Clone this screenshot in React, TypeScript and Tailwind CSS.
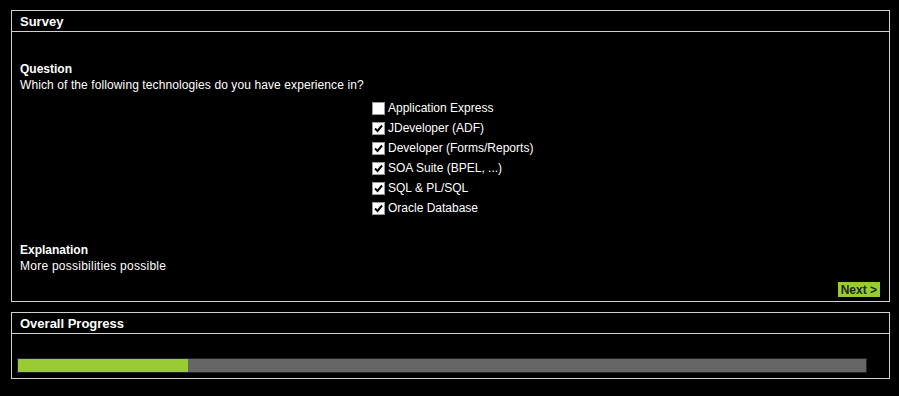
import React from 'react';

const options = [
  { label: 'Application Express', checked: false },
  { label: 'JDeveloper (ADF)', checked: true },
  { label: 'Developer (Forms/Reports)', checked: true },
  { label: 'SOA Suite (BPEL, ...)', checked: true },
  { label: 'SQL & PL/SQL', checked: true },
  { label: 'Oracle Database', checked: true },
];

function Box({ checked }: { checked: boolean }) {
  return (
    <span className="w-[13px] h-[13px] bg-white border border-[#999] flex items-center justify-center shrink-0">
      {checked && (
        <svg width="9" height="9" viewBox="0 0 9 9">
          <path d="M1 4.5 L3.5 7 L8 1.5" fill="none" stroke="#000" strokeWidth="2" />
        </svg>
      )}
    </span>
  );
}

function Panel({ title, children }: { title: string; children: React.ReactNode }) {
  return (
    <div className="border border-[#d0d0d0]">
      <div className="h-[21px] border-b border-[#d0d0d0] pl-[8px] flex items-center text-[13px] font-bold leading-none">
        {title}
      </div>
      {children}
    </div>
  );
}

export default function App() {
  return (
    <div
      className="w-[899px] h-[396px] bg-black text-white text-[12px] leading-4 pl-[11px] pr-[9px] pt-[10px]"
      style={{ fontFamily: '"Liberation Sans", Arial, sans-serif' }}
    >
      <Panel title="Survey">
        <div className="pl-2 pr-2 pt-[29px] pb-1">
          <div className="font-bold">Question</div>
          <div className="tracking-[0.1px]">Which of the following technologies do you have experience in?</div>
          <div className="pl-[352px] pt-[5px] flex flex-col">
            {options.map((o) => (
              <div key={o.label} className="h-5 flex items-center gap-[3px]">
                <Box checked={o.checked} />
                <span>{o.label}</span>
              </div>
            ))}
          </div>
          <div className="mt-6 font-bold">Explanation</div>
          <div className="tracking-[0.25px]">More possibilities possible</div>
          <div className="flex justify-end mt-2 pr-px">
            <button className="h-[15px] px-[3px] bg-[#99cc33] text-[#1a2a10] font-bold text-[12px] leading-none flex items-center">
              Next &gt;
            </button>
          </div>
        </div>
      </Panel>

      <div className="mt-[10px]">
        <Panel title="Overall Progress">
          <div className="pl-[5px] pt-6 pb-[5px]">
            <div className="w-[850px] h-[15px] bg-[#666] border border-[#222] flex">
              <div className="w-[170px] bg-[#99cc33]" />
            </div>
          </div>
        </Panel>
      </div>
    </div>
  );
}
